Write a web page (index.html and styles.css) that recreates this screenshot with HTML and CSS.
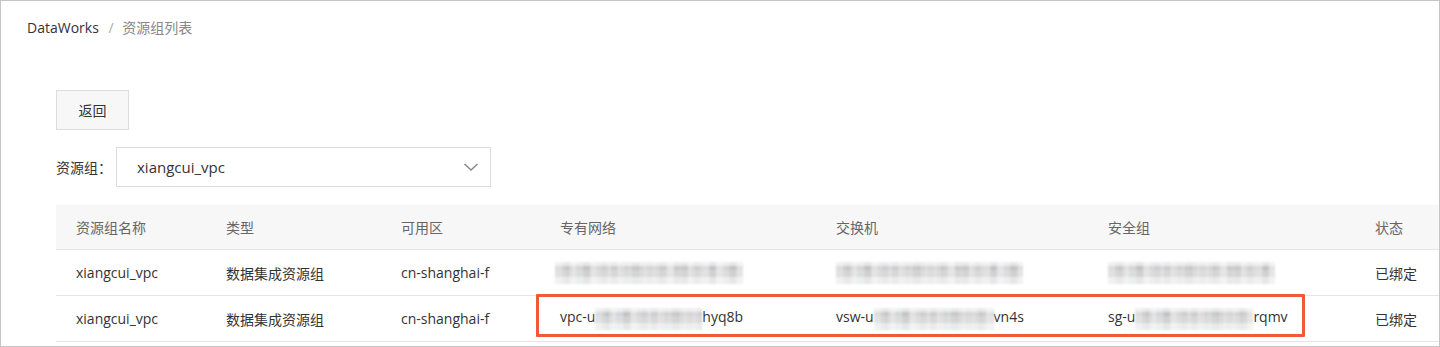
FILE: index.html
```html
<!DOCTYPE html>
<html lang="zh-CN">
<head>
  <meta charset="UTF-8" />
  <title>资源组列表</title>
  <link rel="stylesheet" href="styles.css">
</head>
<body>
  <div class="frame">
    <div class="breadcrumb">
      <span class="crumb-root">DataWorks</span>
      <span class="crumb-sep">/</span>
      <span class="crumb-current">资源组列表</span>
    </div>

    <div class="content">
      <button class="back-btn">返回</button>

      <div class="select-row">
        <label class="select-label">资源组：</label>
        <div class="select-box">
          <span class="select-value">xiangcui_vpc</span>
          <svg class="chevron" width="16" height="10" viewBox="0 0 16 10">
            <path d="M1.5 2 L8 8 L14.5 2" fill="none" stroke="#8a8a8a" stroke-width="1.6" />
          </svg>
        </div>
      </div>

      <div class="table-wrap">
        <table class="rg-table">
          <thead>
            <tr>
              <th class="c-name">资源组名称</th>
              <th class="c-type">类型</th>
              <th class="c-zone">可用区</th>
              <th class="c-vpc">专有网络</th>
              <th class="c-vsw">交换机</th>
              <th class="c-sg">安全组</th>
              <th class="c-status">状态</th>
            </tr>
          </thead>
          <tbody>
            <tr>
              <td>xiangcui_vpc</td>
              <td>数据集成资源组</td>
              <td>cn-shanghai-f</td>
              <td><span class="mosaic m-vpc-full"></span></td>
              <td><span class="mosaic m-vsw-full"></span></td>
              <td><span class="mosaic m-sg-full"></span></td>
              <td>已绑定</td>
            </tr>
            <tr>
              <td>xiangcui_vpc</td>
              <td>数据集成资源组</td>
              <td>cn-shanghai-f</td>
              <td>vpc-u<span class="mosaic m-vpc"></span>hyq8b</td>
              <td>vsw-u<span class="mosaic m-vsw"></span>vn4s</td>
              <td>sg-u<span class="mosaic m-sg"></span>rqmv</td>
              <td>已绑定</td>
            </tr>
          </tbody>
        </table>
        <div class="highlight"></div>
      </div>
    </div>
  </div>
</body>
</html>
```

FILE: styles.css
```css
html, body {
  margin: 0;
  padding: 0;
  background: #fff;
}

body {
  font-family: "Open Sans", "Noto Sans CJK SC", sans-serif;
  font-size: 14px;
  color: #333;
}

.frame {
  box-sizing: border-box;
  width: 1440px;
  height: 347px;
  border: 1px solid #c6c6c6;
  overflow: hidden;
}

.breadcrumb {
  margin: 17px 0 0 26px;
  line-height: 20px;
  font-size: 14px;
}

.crumb-root {
  color: #333;
}

.crumb-sep {
  color: #aaa;
  margin: 0 5px 0 6px;
}

.crumb-current {
  color: #888;
}

.content {
  padding-left: 55px;
}

.back-btn {
  display: block;
  margin-top: 52px;
  width: 73px;
  height: 40px;
  background: #f7f7f7;
  border: 1px solid #dcdcdc;
  font-family: inherit;
  font-size: 14px;
  color: #333;
  padding: 0;
}

.select-row {
  display: flex;
  align-items: center;
  margin-top: 17px;
}

.select-label {
  width: 60px;
  color: #333;
}

.select-box {
  box-sizing: border-box;
  width: 375px;
  height: 40px;
  border: 1px solid #dcdcdc;
  display: flex;
  align-items: center;
  justify-content: space-between;
  padding: 0 11px 0 20px;
}

.select-value {
  font-size: 15px;
  color: #333;
}

.table-wrap {
  position: relative;
  margin-top: 18px;
  width: 1500px;
}

.rg-table {
  border-collapse: collapse;
  table-layout: fixed;
  width: 1500px;
}

.rg-table th,
.rg-table td {
  text-align: left;
  padding: 0 0 0 20px;
  white-space: nowrap;
  border-bottom: 1px solid #e6e6e6;
  font-weight: normal;
}

.rg-table th {
  height: 44px;
  background: #f7f7f7;
  color: #666;
}

.rg-table td {
  height: 45px;
  color: #333;
}

.c-name { width: 130px; }
.c-type { width: 155px; }
.c-zone { width: 139px; }
.c-vpc { width: 256px; }
.c-vsw { width: 252px; }
.c-sg { width: 247px; }

/* pixelated / blurred ids */
.mosaic {
  display: inline-block;
  height: 22px;
  vertical-align: middle;
  background:
    linear-gradient(180deg, rgba(255,255,255,0.6) 0 4px, rgba(255,255,255,0) 4px 8px, rgba(235,235,235,0.35) 8px 15px, rgba(255,255,255,0.6) 15px),
    repeating-linear-gradient(90deg, rgba(0,0,0,0) 0 11px, rgba(120,120,130,0.12) 11px 17px, rgba(0,0,0,0) 17px 29px, rgba(150,130,130,0.1) 29px 36px),
    repeating-linear-gradient(90deg, #dcdcdc 0 7px, #cdcdd0 7px 14px, #e4e2e2 14px 21px, #d2d6d8 21px 28px, #c8c8c8 28px 35px, #e0e0e0 35px 42px, #d6d4d6 42px 49px);
  filter: blur(1.3px);
}

.m-vpc-full { width: 188px; margin-left: -5px; }
.m-vsw-full { width: 187px; }
.m-sg-full { width: 167px; }

.m-vpc { width: 107px; }
.m-vsw { width: 120px; }
.m-sg { width: 118px; }

.highlight {
  position: absolute;
  left: 480px;
  top: 89px;
  width: 769px;
  height: 43px;
  box-sizing: border-box;
  border: 3px solid #f0593c;
  border-radius: 1px;
}
```
